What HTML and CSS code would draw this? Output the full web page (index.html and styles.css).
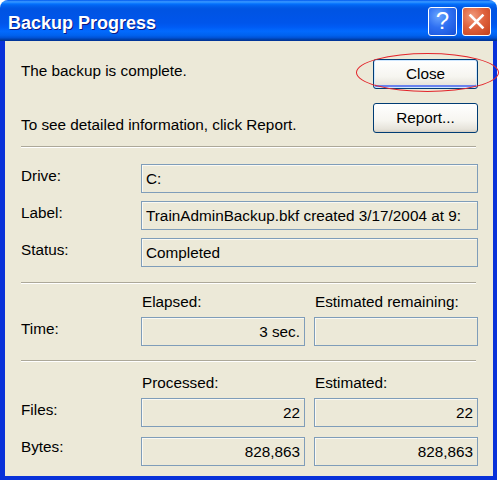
FILE: index.html
```html
<!DOCTYPE html>
<html>
<head>
    <title>Backup Progress</title>
    <link rel="stylesheet" href="styles.css">
</head>
<body>
    <div class="window">
        <div class="titlebar">
            <span class="title-text">Backup Progress</span>
            <div class="title-buttons">
                <span class="tb-btn tb-help">?</span>
                <span class="tb-btn tb-close">
                    <svg width="17" height="17" viewBox="0 0 17 17">
                        <path d="M2.5 2.5 L14.5 14.5 M14.5 2.5 L2.5 14.5" stroke="#fff" stroke-width="2.6" stroke-linecap="square" fill="none"/>
                    </svg>
                </span>
            </div>
        </div>

        <div class="frame">
            <div class="dialog">
                <div class="top">
                    <div class="messages">
                        <p class="msg">The backup is complete.</p>
                        <p class="msg msg-report">To see detailed information, click Report.</p>
                    </div>
                    <div class="actions">
                        <div class="close-wrap">
                            <button class="btn btn-default">Close</button>
                            <span class="highlight-ring"></span>
                        </div>
                        <button class="btn">Report...</button>
                    </div>
                </div>

                <div class="separator"></div>

                <div class="info">
                    <span class="label">Drive:</span>
                    <div class="field">C:</div>
                    <span class="label">Label:</span>
                    <div class="field">TrainAdminBackup.bkf created 3/17/2004 at 9:</div>
                    <span class="label">Status:</span>
                    <div class="field">Completed</div>
                </div>

                <div class="separator sep-time"></div>

                <div class="stats stats-time">
                    <span></span>
                    <span class="caption">Elapsed:</span>
                    <span class="caption">Estimated remaining:</span>
                    <span class="label">Time:</span>
                    <div class="field num">3 sec.</div>
                    <div class="field num"></div>
                </div>

                <div class="separator sep-files"></div>

                <div class="stats stats-files">
                    <span></span>
                    <span class="caption">Processed:</span>
                    <span class="caption">Estimated:</span>
                    <span class="label">Files:</span>
                    <div class="field num">22</div>
                    <div class="field num">22</div>
                    <span class="label row-bytes">Bytes:</span>
                    <div class="field num row-bytes">828,863</div>
                    <div class="field num row-bytes">828,863</div>
                </div>
            </div>
        </div>
    </div>
</body>
</html>
```

FILE: styles.css
```css
body {
    margin: 0;
    background-color: #fff;
    font-family: "Liberation Sans", Arial, sans-serif;
    font-size: 15.3px;
    color: #000;
}

.window {
    width: 497px;
    height: 480px;
    display: flex;
    flex-direction: column;
}

.titlebar {
    height: 41px;
    box-sizing: border-box;
    display: flex;
    align-items: center;
    justify-content: space-between;
    padding: 0 6px 0 8px;
    border-radius: 8px 8px 0 0;
    background: linear-gradient(to bottom,
        #0058ee 0%, #3593ff 4%, #288eff 6%, #127dff 8%, #036ffc 10%,
        #0262ee 14%, #0057e5 20%, #0054e3 24%, #0055eb 56%, #005bf5 66%,
        #026afe 76%, #0062ef 86%, #0052d6 92%, #0040ab 96%, #003092 100%);
}

.title-text {
    color: #fff;
    font-size: 18px;
    font-weight: bold;
    padding-top: 5px;
    text-shadow: 1px 1px 0 #0a1883;
}

.title-buttons {
    display: flex;
    gap: 5px;
    margin-top: 2px;
}

.tb-btn {
    width: 29px;
    height: 29px;
    box-sizing: border-box;
    border: 1px solid #fff;
    border-radius: 3px;
    display: flex;
    align-items: center;
    justify-content: center;
    color: #fff;
}

.tb-help {
    background: radial-gradient(circle at 35% 30%, #6aa6ff 0%, #2f70f2 45%, #1550d8 100%);
    font-size: 24px;
    font-family: "Liberation Sans", Arial, sans-serif;
    padding-bottom: 1px;
}

.tb-close {
    background: radial-gradient(circle at 35% 30%, #f09a7c 0%, #e0633e 45%, #c4401c 100%);
}

.frame {
    flex: 1;
    display: flex;
    background-color: #0831d9;
    padding: 0 4px 4px 5px;
}

.dialog {
    flex: 1;
    background-color: #ece9d8;
    padding: 0 15px 0 16px;
}

.top {
    height: 105px;
    display: flex;
    justify-content: space-between;
}

.messages {
    padding-top: 21px;
}

.msg {
    margin: 0;
    line-height: 18px;
}

.msg-report {
    margin-top: 36px;
}

.actions {
    padding-top: 18px;
    display: flex;
    flex-direction: column;
    gap: 14px;
}

.close-wrap {
    position: relative;
}

.btn {
    display: block;
    width: 105px;
    height: 30px;
    box-sizing: border-box;
    border: 1px solid #003c74;
    border-radius: 3px;
    background: linear-gradient(to bottom, #ffffff 0%, #f6f5f0 60%, #e6e3da 90%, #d6d0c5 100%);
    font-family: "Liberation Sans", Arial, sans-serif;
    font-size: 15.3px;
    color: #000;
    padding: 0;
    box-shadow: inset 0 -1px 0 #d6d0c5;
}

.btn-default {
    box-shadow: inset 0 0 0 1px #cee7ff, inset 0 -2px 0 1px #6982ee;
}

.highlight-ring {
    position: absolute;
    left: -17px;
    top: -6px;
    width: 143px;
    height: 39px;
    box-sizing: border-box;
    border: 1px solid #e3262c;
    border-radius: 50%;
}

.separator {
    height: 0;
    border-top: 1px solid #aca899;
    border-bottom: 1px solid #fff;
    margin-right: 2px;
}

.info {
    display: grid;
    grid-template-columns: 111px 1fr;
    column-gap: 9px;
    row-gap: 8px;
    grid-auto-rows: 29px;
    margin-top: 16px;
}

.label {
    align-self: center;
    line-height: 18px;
    padding-bottom: 5px;
}

.field {
    height: 29px;
    box-sizing: border-box;
    border: 1px solid #7f9db9;
    box-shadow: inset 1px 1px 0 #faf9f3;
    display: flex;
    align-items: center;
    padding: 0 4px;
    white-space: nowrap;
    overflow: hidden;
}

.field.num {
    justify-content: flex-end;
}

.sep-time {
    margin-top: 15px;
}

.sep-files {
    margin-top: 14px;
}

.stats {
    display: grid;
    grid-template-columns: 111px 164px 164px;
    grid-template-rows: 18px 29px;
    column-gap: 9px;
    row-gap: 6px;
}

.stats-time {
    margin-top: 9px;
}

.stats-files {
    margin-top: 12px;
    grid-template-rows: 18px 29px 29px;
}

.caption {
    line-height: 18px;
    padding-left: 1px;
}

.row-bytes {
    margin-top: 4px;
}
```
